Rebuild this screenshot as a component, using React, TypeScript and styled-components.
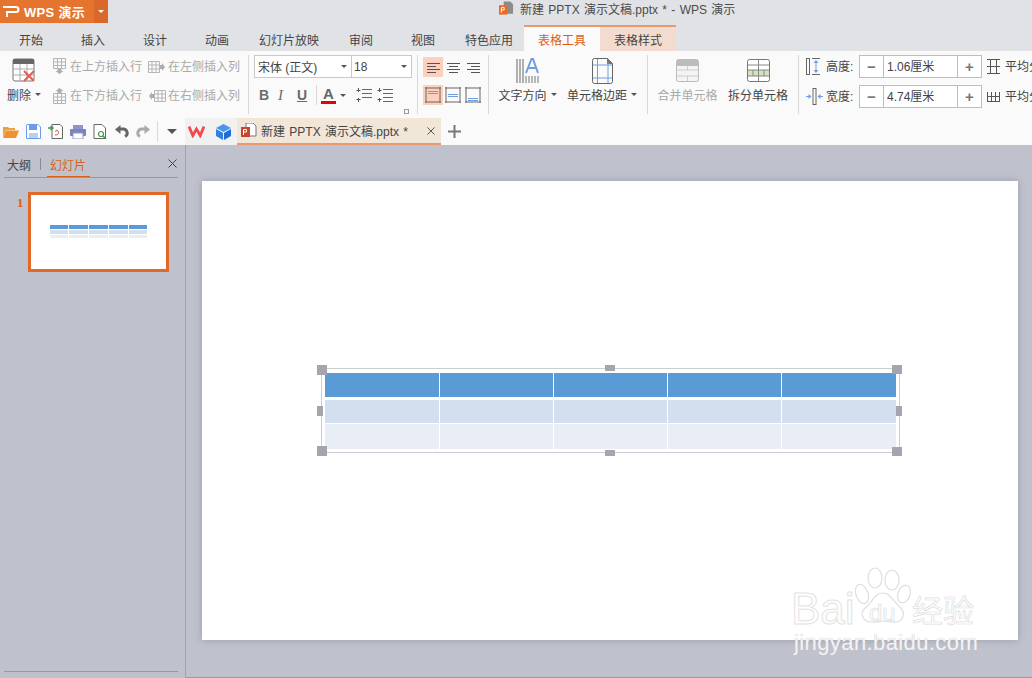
import React from 'react';
import styled, { createGlobalStyle } from 'styled-components';

const GlobalStyle = createGlobalStyle`
  html, body { margin: 0; padding: 0; overflow: hidden; }
  body { font-family: "Liberation Sans", "Noto Sans CJK SC", sans-serif; font-size: 12px; color: #444; }
`;

const Page = styled.div`
  width: 1032px;
  height: 678px;
  display: flex;
  flex-direction: column;
  position: relative;
  overflow: hidden;
  background: #bfc2cc;
`;

const TitleBar = styled.div`
  height: 25px;
  display: flex;
  background: #e1e2e5;
  position: relative;
`;

const AppButton = styled.div`
  width: 94px;
  height: 23px;
  display: flex;
  align-items: center;
  gap: 4px;
  padding-left: 3px;
  box-sizing: border-box;
  background: #e5742f;
  color: #fff;
  font-size: 13px;
  font-weight: 700;
  letter-spacing: 0.3px;
`;

const AppArrow = styled.div`
  width: 14px;
  height: 23px;
  display: flex;
  align-items: center;
  justify-content: center;
  background: #d9682a;
`;

const Caret = styled.span<{ $color?: string; $size?: number }>`
  display: inline-block;
  width: 0;
  height: 0;
  border-left: ${p => p.$size || 3}px solid transparent;
  border-right: ${p => p.$size || 3}px solid transparent;
  border-top: ${p => p.$size || 3}px solid ${p => p.$color || '#555'};
`;

const DocTitle = styled.div`
  margin-left: 391px;
  display: flex;
  align-items: center;
  gap: 6px;
  height: 17px;
  color: #4b4b4b;
  font-size: 12px;
  word-spacing: 1px;
  white-space: nowrap;
`;

const TabBar = styled.div`
  height: 26px;
  display: flex;
  background: #e1e2e5;
`;

const Tab = styled.div<{ $w: number; $kind?: 'active' | 'style' }>`
  width: ${p => p.$w}px;
  box-sizing: border-box;
  display: flex;
  align-items: center;
  justify-content: center;
  padding-top: ${p => (p.$kind ? 0 : 2)}px;
  font-size: 12px;
  color: ${p => (p.$kind === 'active' ? '#d9601c' : '#444')};
  background: ${p => (p.$kind === 'active' ? '#fafafa' : p.$kind === 'style' ? '#f3dccf' : 'transparent')};
  border-top: ${p => (p.$kind ? '2px solid #e89a6e' : 'none')};
`;

const Ribbon = styled.div`
  height: 67px;
  display: flex;
  background: #fafafa;
  overflow: hidden;
`;

const Group = styled.div<{ $w: number; $sep?: boolean }>`
  width: ${p => p.$w}px;
  height: 59px;
  margin-top: 4px;
  flex: none;
  box-sizing: border-box;
  border-right: ${p => (p.$sep ? '1px solid #d9d9d9' : 'none')};
  position: relative;
  display: flex;
`;

const BigButton = styled.div<{ $w: number; $off?: boolean }>`
  width: ${p => p.$w}px;
  flex: none;
  display: flex;
  flex-direction: column;
  align-items: center;
  font-size: 12px;
  white-space: nowrap;
  color: ${p => (p.$off ? '#a9a9a9' : '#444')};
`;

const BigIcon = styled.div`
  height: 31px;
  display: flex;
  align-items: center;
  justify-content: center;
`;

const BigLabel = styled.div`
  height: 16px;
  display: flex;
  align-items: center;
  gap: 4px;
`;

const InsertGrid = styled.div`
  display: grid;
  grid-template-columns: 96px 96px;
  grid-auto-rows: 22px;
  row-gap: 7px;
  padding-left: 4px;
`;

const SmallCmd = styled.div<{ $gap?: number }>`
  display: flex;
  align-items: center;
  gap: ${p => p.$gap || 0}px;
  font-size: 12px;
  color: #a9a9a9;
  white-space: nowrap;
`;

const CmdText = styled.span`
  position: relative;
  top: -1px;
`;

const FontColumn = styled.div`
  padding-left: 5px;
  display: flex;
  flex-direction: column;
  gap: 6px;
`;

const SelectRow = styled.div`
  display: flex;
  width: 158px;
  height: 23px;
  box-sizing: border-box;
  border: 1px solid #c9c9c9;
  background: #fff;
`;

const SelectCell = styled.div<{ $w: number; $line?: boolean }>`
  width: ${p => p.$w}px;
  box-sizing: border-box;
  padding: 0 4px 0 ${p => (p.$line ? 3 : 2)}px;
  display: flex;
  align-items: center;
  justify-content: space-between;
  color: #444;
  border-right: ${p => (p.$line ? '1px solid #c9c9c9' : 'none')};
`;

const FormatRow = styled.div`
  display: flex;
  align-items: center;
  height: 22px;
  padding-left: 4px;
`;

const FormatLetter = styled.span<{ $italic?: boolean; $under?: boolean }>`
  width: 19px;
  padding-left: 1px;
  box-sizing: border-box;
  font-family: ${p => (p.$italic ? '"Liberation Serif", serif' : '"Liberation Sans", sans-serif')};
  font-size: ${p => (p.$italic ? 15 : 14)}px;
  font-weight: ${p => (p.$italic ? 400 : 700)};
  font-style: ${p => (p.$italic ? 'italic' : 'normal')};
  text-decoration: ${p => (p.$under ? 'underline' : 'none')};
  color: #6b6b6b;
`;

const VRule = styled.span`
  width: 1px;
  height: 20px;
  background: #d9d9d9;
  margin: 0 4px 0 1px;
`;

const ColorA = styled.span`
  width: 15px;
  text-align: center;
  font-size: 15px;
  line-height: 14px;
  font-weight: 700;
  color: #666;
  border-bottom: 3px solid #e60012;
  margin-right: 4px;
`;

const FormatGap = styled.span<{ $w: number }>`
  width: ${p => p.$w}px;
`;

const Launcher = styled.span`
  position: absolute;
  right: 8px;
  bottom: 0;
  width: 3px;
  height: 3px;
  border: 1px solid #999;
`;

const AlignGrid = styled.div`
  display: grid;
  grid-template-columns: repeat(3, 20px);
  grid-auto-rows: 20px;
  row-gap: 8px;
  padding: 2px 0 0 5px;
`;

const AlignCell = styled.div<{ $on?: boolean }>`
  display: flex;
  align-items: center;
  justify-content: center;
  background: ${p => (p.$on ? '#fcd0bc' : 'transparent')};
`;

const SizeColumn = styled.div`
  display: flex;
  flex-direction: column;
  gap: 7px;
  padding-left: 7px;
`;

const SizeRow = styled.div`
  display: flex;
  align-items: center;
  height: 23px;
  white-space: nowrap;
`;

const SizeLabel = styled.span<{ $left: number }>`
  width: 33px;
  margin-left: ${p => p.$left}px;
  padding-bottom: 2px;
  color: #444;
`;

const Spinner = styled.div`
  width: 123px;
  height: 23px;
  box-sizing: border-box;
  border: 1px solid #bdbdbd;
  display: flex;
  background: #fff;
  margin-right: 5px;
`;

const SpinBtn = styled.div`
  width: 23px;
  display: flex;
  align-items: center;
  justify-content: center;
  font-size: 15px;
  font-weight: 700;
  color: #777;
`;

const SpinValue = styled.div`
  flex: 1;
  box-sizing: border-box;
  padding: 0 0 2px 3px;
  display: flex;
  align-items: center;
  color: #444;
  border-left: 1px solid #bdbdbd;
  border-right: 1px solid #bdbdbd;
`;

const DistLabel = styled.span`
  margin-left: 5px;
  padding-bottom: 2px;
`;

const QuickBar = styled.div`
  height: 27px;
  display: flex;
  background: #fafafa;
`;

const QuickIcons = styled.div`
  width: 185px;
  flex: none;
  display: flex;
  align-items: center;
  gap: 7px;
  padding-left: 3px;
  box-sizing: border-box;
`;

const QuickRule = styled.span`
  width: 1px;
  height: 21px;
  margin-right: 2px;
  background: #d9d9d9;
`;

const PinnedApps = styled.div`
  width: 52px;
  flex: none;
  box-sizing: border-box;
  display: flex;
  align-items: center;
  gap: 11px;
  padding-left: 3px;
  background: #f1f1f1;
`;

const DocTab = styled.div`
  width: 204px;
  flex: none;
  box-sizing: border-box;
  display: flex;
  align-items: center;
  gap: 4px;
  padding-left: 4px;
  background: #f2e6d9;
  border-bottom: 2px solid #e89a6e;
  color: #444;
  word-spacing: 1px;
  white-space: nowrap;
`;

const TabClose = styled.span`
  margin-left: auto;
  margin-right: 6px;
  display: flex;
`;

const AddTab = styled.div`
  margin-left: 7px;
  display: flex;
  align-items: center;
`;

const Workspace = styled.div`
  flex: 1;
  display: flex;
  min-height: 0;
`;

const Sidebar = styled.aside`
  width: 186px;
  flex: none;
  box-sizing: border-box;
  border-right: 1px solid #9fa2aa;
  padding: 9px 7px 6px 4px;
  display: flex;
  flex-direction: column;
`;

const SideTabs = styled.div`
  height: 23px;
  display: flex;
  align-items: flex-start;
  border-bottom: 1px solid #96989f;
  position: relative;
  font-size: 12px;
`;

const SideTab = styled.div<{ $on?: boolean }>`
  height: 23px;
  box-sizing: border-box;
  padding: 2px 4px 0 3px;
  color: ${p => (p.$on ? '#d9601c' : '#444')};
  border-bottom: ${p => (p.$on ? '1px solid #d9601c' : 'none')};
`;

const SideDivider = styled.span`
  width: 1px;
  height: 12px;
  margin: 4px 6px 0 5px;
  background: #8a8c93;
`;

const SideClose = styled.span`
  margin-left: auto;
  margin-top: 5px;
  margin-right: 1px;
  display: flex;
`;

const ThumbRow = styled.div`
  display: flex;
  align-items: flex-start;
  margin-top: 14px;
  flex: 1;
`;

const ThumbNumber = styled.div`
  width: 24px;
  padding: 3px 0 0 13px;
  box-sizing: border-box;
  font-family: "Liberation Serif", serif;
  font-size: 13px;
  font-weight: 700;
  color: #d9601c;
`;

const Thumb = styled.div`
  width: 141px;
  height: 80px;
  box-sizing: border-box;
  border: 3px solid #e0692a;
  background: #fff;
  padding-top: 30px;
  display: flex;
  justify-content: center;
`;

const ThumbTable = styled.div`
  width: 98px;
  display: grid;
  grid-template-columns: repeat(5, 1fr);
  column-gap: 1px;
  row-gap: 1px;
  align-self: flex-start;
`;

const ThumbCell = styled.span<{ $row: number }>`
  height: ${p => (p.$row === 2 ? 3 : 4)}px;
  background: ${p => ROW_COLORS[p.$row]};
`;

const SideFooter = styled.div`
  height: 1px;
  background: #96989f;
`;

const Canvas = styled.main`
  flex: 1;
  padding: 36px 0 0 16px;
  box-sizing: border-box;
  border-bottom: 1px solid #9a9ca4;
`;

const Slide = styled.div`
  width: 816px;
  height: 459px;
  background: #fff;
  box-shadow: 0 0 7px rgba(110, 112, 125, 0.45);
  position: relative;
`;

const Frame = styled.div`
  position: absolute;
  left: 119px;
  top: 187px;
  width: 579px;
  height: 85px;
  box-sizing: border-box;
  border: 1px solid #cdcdcd;
`;

const TableGrid = styled.div`
  position: absolute;
  left: 123px;
  top: 192px;
  display: grid;
  grid-template-columns: 114px 113px 113px 113px 114px;
  grid-template-rows: 24px 26px 26px;
  column-gap: 1px;
`;

const Cell = styled.div<{ $row: number }>`
  background: ${p => ROW_COLORS[p.$row]};
  margin-top: ${p => (p.$row === 1 ? 3 : p.$row === 2 ? 1 : 0)}px;
`;

const Handle = styled.span<{ $x: number; $y: number; $w: number; $h: number }>`
  position: absolute;
  left: ${p => p.$x - 202}px;
  top: ${p => p.$y - 181}px;
  width: ${p => p.$w}px;
  height: ${p => p.$h}px;
  background: #a4a5ae;
`;

const Watermark = styled.div`
  position: absolute;
  left: 790px;
  top: 566px;
  width: 200px;
  height: 90px;
  pointer-events: none;
`;

const WmBai = styled.span`
  position: absolute;
  left: 1px;
  top: 21px;
  font-size: 44px;
  line-height: 44px;
  color: #fff;
  -webkit-text-stroke: 1px #e2e2e2;
`;

const WmDu = styled.span`
  position: absolute;
  left: 79px;
  top: 35px;
  font-size: 24px;
  line-height: 24px;
  color: #fff;
  -webkit-text-stroke: 0.7px #dedede;
`;

const WmCn = styled.span`
  position: absolute;
  left: 122px;
  top: 30px;
  font-size: 31px;
  line-height: 32px;
  color: #fff;
  -webkit-text-stroke: 0.7px #dedede;
`;

const WmUrl = styled.span`
  position: absolute;
  left: 4px;
  top: 65px;
  font-size: 22px;
  line-height: 24px;
  letter-spacing: 0.4px;
  color: #f3f3f5;
  text-shadow: 0 0 1px #c4c4c8;
  white-space: nowrap;
`;

const ROW_COLORS = ['#5b9bd5', '#d3deef', '#e9edf6'];

const PLogo = () => (
  <svg width="17" height="11" viewBox="0 0 17 11" fill="none" stroke="#fff" strokeWidth="2">
    <path d="M0 1h13a2.500 2.500 0 0 1 0 5H4v5" />
  </svg>
);

const DeleteIcon = () => (
  <svg width="24" height="25" viewBox="0 0 24 25">
    <rect x="1" y="1" width="21" height="22" rx="2" fill="#fff" stroke="#777" />
    <rect x="1" y="1" width="21" height="5" fill="#666" />
    <path d="M1 11h21M1 17h21M8 6v17M15 6v17" stroke="#aaa" />
    <path d="M12 13l10 10M22 13L12 23" stroke="#ea5a50" strokeWidth="2" />
  </svg>
);

// place = where the new row/column goes, so the arrow sits on the opposite side of the grid
const InsertIcon = ({ place }: { place: 'above' | 'below' | 'left' | 'right' }) => {
  const shapes = {
    above: { grid: 'M1.500 .500h12v10h-12zM1.500 4h12M1.500 7.500h12M5.500 .500v10M9.500 .500v10', arrow: 'M5.500 11h4v2h2l-4 3-4-3h2z' },
    below: { grid: 'M1.500 6.500h12v10h-12zM1.500 10h12M1.500 13.500h12M5.500 6.500v10M9.500 6.500v10', arrow: 'M5.500 6h4V4h2l-4-3-4 3h2z' },
    left: { grid: 'M.500 3.500h11v11h-11zM.500 7h11M.500 11h11M4 3.500v11M8 3.500v11', arrow: 'M12 7h2V5l3 4-3 4v-2h-2z' },
    right: { grid: 'M6.500 3.500h11v11h-11zM6.500 7h11M6.500 11h11M10 3.500v11M14 3.500v11', arrow: 'M6 7H4V5L1 9l3 4v-2h2z' },
  }[place];
  return (
    <svg width="18" height="17" viewBox="0 0 18 17" fill="none">
      <path d={shapes.grid} stroke="#b5b5b5" />
      <path d={shapes.arrow} fill="#adadad" />
    </svg>
  );
};

const AlignLines = ({ align }: { align: 'l' | 'c' | 'r' }) => {
  const x = (w: number) => (align === 'l' ? 0 : align === 'c' ? (13 - w) / 2 : 13 - w);
  return (
    <svg width="13" height="11" viewBox="0 0 13 11" stroke="#555">
      <path d={`M${x(13)} 1.500h13M${x(9)} 4.500h9M${x(13)} 7.500h13M${x(9)} 10.500h9`} />
    </svg>
  );
};

const VAlignIcon = ({ pos }: { pos: 't' | 'm' | 'b' }) => {
  const y = pos === 't' ? 4 : pos === 'm' ? 7 : 11;
  return (
    <svg width="16" height="16" viewBox="0 0 16 16" fill="none">
      <path d="M1 0v16M15 0v16M0 1h16M0 15h16" stroke="#666" />
      <path d={`M3 ${y}.5h10M3 ${y + 2}.5h10`} stroke="#6f9fe0" />
    </svg>
  );
};

const SpacingIcon = ({ lines }: { lines: number }) => (
  <svg width="17" height="16" viewBox="0 0 17 16" fill="none">
    <path d="M3.500 1v4M1.500 3.500h4M3.500 11v4M1.500 12.500h4" stroke="#555" />
    {[2, 6, 10, 14].slice(0, lines).map(y => (
      <path key={y} d={`M7 ${y}.5h10`} stroke="#666" />
    ))}
  </svg>
);

const TextDirIcon = () => (
  <svg width="24" height="26" viewBox="0 0 24 26">
    <path d="M1 1v24M4 1v24M7 1v24" stroke="#666" />
    <path d="M10 18v7M13 18v7M16 18v7M19 18v7M22 18v7" stroke="#777" />
    <path d="M10 15L15.500 1h1.500L22 15M12 10h8" stroke="#6f9fe0" strokeWidth="2" fill="none" />
  </svg>
);

const CellMarginIcon = () => (
  <svg width="21" height="26" viewBox="0 0 21 26" fill="none">
    <path d="M2.500.500h13l5 5v18a2 2 0 0 1-2 2H2.500a2 2 0 0 1-2-2V2.500a2 2 0 0 1 2-2z" stroke="#666" />
    <path d="M15 0l6 6h-6z" fill="#777" />
    <path d="M5.500 1v24M16 5v20M1 7h19M1 20h19" stroke="#6f9fe0" />
  </svg>
);

const MergeIcon = () => (
  <svg width="23" height="23" viewBox="0 0 23 23">
    <rect x=".5" y=".5" width="22" height="22" rx="2" fill="#f4f4f4" stroke="#bbb" />
    <rect x="1" y="1" width="21" height="6" fill="#bcbcbc" />
    <path d="M1 11h21M1 17h21M11.500 7v4M11.500 17v5" stroke="#ccc" />
  </svg>
);

const SplitIcon = () => (
  <svg width="23" height="23" viewBox="0 0 23 23">
    <rect x=".5" y=".5" width="22" height="22" rx="2" fill="#fff" stroke="#777" />
    <rect x="1" y="11" width="21" height="6" fill="#d4e3bd" />
    <path d="M1 6h21M1 11h21M1 17h21M11.500 1v21M6 11v6M17 11v6" stroke="#888" />
  </svg>
);

const HeightIcon = () => (
  <svg width="14" height="17" viewBox="0 0 14 17" fill="none">
    <rect x=".5" y=".5" width="3" height="16" stroke="#666" />
    <path d="M6 .500h8M6 16.500h8" stroke="#666" />
    <path d="M10 2l-2.500 3h5zM10 15l-2.500-3h5z" fill="#6f9fe0" />
    <path d="M10 5v7" stroke="#6f9fe0" />
  </svg>
);

const WidthIcon = () => (
  <svg width="17" height="17" viewBox="0 0 17 17" fill="none">
    <rect x="7" y=".5" width="3" height="16" stroke="#666" />
    <path d="M5.500 8.500L2.500 6v5zM11.500 8.500l3-2.500v5z" fill="#6f9fe0" />
    <path d="M0 8.500h3M14 8.500h3" stroke="#6f9fe0" />
  </svg>
);

const DistRowsIcon = () => (
  <svg width="13" height="15" viewBox="0 0 13 15" stroke="#555" fill="none">
    <path d="M0 .500h13M0 7.500h13M0 14.500h13M3.500 0v15M9.500 0v15" />
  </svg>
);

const DistColsIcon = () => (
  <svg width="13" height="11" viewBox="0 0 13 11" stroke="#555" fill="none">
    <path d="M0 5.500h13M0 10.500h13M.5 1v10M4.500 1v10M8.500 1v10M12.500 1v10" />
  </svg>
);

const CloseIcon = ({ size = 9 }: { size?: number }) => (
  <svg width={size} height={size} viewBox="0 0 9 9" stroke="#444" fill="none">
    <path d="M.5.500l8 8M8.500.500l-8 8" />
  </svg>
);

const FolderIcon = () => (
  <svg width="16" height="14" viewBox="0 0 16 14">
    <path d="M0 2h5l1 1h6v2H3L0 12z" fill="#e8a33d" />
    <path d="M3 5.500h13L13 13H0z" fill="#f0902e" />
  </svg>
);

const SaveIcon = () => (
  <svg width="15" height="15" viewBox="0 0 15 15" fill="none">
    <path d="M1 .5h11l2.500 2.500v11.500H.5V1z" fill="#fff" stroke="#6c9be8" />
    <rect x="3" y="1" width="8" height="5" fill="#6c9be8" />
    <rect x="3" y="9" width="9" height="5" fill="#b9d0f2" />
  </svg>
);

const ExportIcon = () => (
  <svg width="15" height="15" viewBox="0 0 15 15" fill="none">
    <path d="M4 .5h8l2.500 2.500v11.500H4z" fill="#fff" stroke="#666" />
    <path d="M0 4h4M2.500 2l2.500 2-2.500 2" stroke="#3b9a4b" strokeWidth="1.400" />
    <path d="M7 11c4 0 4-2 3-4-1-1.500-3-.5-2 1" stroke="#d9453a" />
  </svg>
);

const PrintIcon = () => (
  <svg width="16" height="14" viewBox="0 0 16 14">
    <rect x="3" y="0" width="10" height="4" fill="#8f95c9" />
    <rect x="0" y="4" width="16" height="7" rx="1" fill="#7d84bd" />
    <rect x="3" y="8" width="10" height="6" fill="#fff" stroke="#8f95c9" />
  </svg>
);

const PreviewIcon = () => (
  <svg width="15" height="15" viewBox="0 0 15 15" fill="none">
    <path d="M1 .5h8l3.500 3.500v10.500H1z" stroke="#666" fill="#fff" />
    <circle cx="8" cy="10" r="2.500" stroke="#3b9a4b" strokeWidth="1.200" />
    <path d="M10 12l3 3" stroke="#3b9a4b" strokeWidth="1.600" />
  </svg>
);

const UndoIcon = ({ color, flip }: { color: string; flip?: boolean }) => (
  <svg width="14" height="13" viewBox="0 0 14 13" fill="none" style={flip ? { transform: 'scaleX(-1)' } : undefined}>
    <path d="M3 4h4.500a4 4 0 0 1 2.500 7.500" stroke={color} strokeWidth="3" />
    <path d="M0 4.500L5.500 0v9z" fill={color} />
  </svg>
);

const WpsMark = () => (
  <svg width="17" height="13" viewBox="0 0 17 13" fill="none">
    <path d="M1 1.500l3.800 9L8.500 4l3.700 6.500L16 1.500" stroke="#f4484d" strokeWidth="2.800" />
  </svg>
);

const CubeMark = () => (
  <svg width="15" height="16" viewBox="0 0 15 16">
    <path d="M7.500 0L15 4 7.500 8 0 4z" fill="#4a96ee" />
    <path d="M0 5l7 4v7l-7-4z" fill="#2f7fe0" />
    <path d="M15 5l-7 4v7l7-4z" fill="#1d6fd6" />
  </svg>
);

const PptFileIcon = ({ small }: { small?: boolean }) => (
  <svg width={small ? 15 : 16} height="15" viewBox="0 0 16 15">
    <path d="M5 0h7l3 3v10H5z" fill={small ? '#8c8c8c' : '#fff'} stroke={small ? 'none' : '#777'} />
    <rect x="0" y="4" width="9" height="10" fill={small ? '#ea6a22' : '#c8452c'} />
    <path d="M2.500 12V6.500h3v2.500h-3" stroke="#fff" fill="none" />
  </svg>
);

const Paw = () => (
  <svg width="56" height="58" viewBox="0 0 56 58" fill="#fff" stroke="#dedede" strokeWidth="1.200" style={{ position: 'absolute', left: 65, top: 1 }}>
    <ellipse cx="7" cy="27" rx="6" ry="10" transform="rotate(-20 7 27)" />
    <ellipse cx="20" cy="11" rx="7" ry="10" />
    <ellipse cx="37" cy="13" rx="7" ry="10" />
    <ellipse cx="49" cy="27" rx="6" ry="9" transform="rotate(20 49 27)" />
    <path d="M28 26c7 0 10 8 17 14 7 7 2 16-7 15-4 0-6-1-10-1s-7 2-11 1C8 55 4 47 10 41c7-5 9-15 18-15z" />
  </svg>
);

const handles = [
  { x: 317, y: 365, w: 10, h: 10 },
  { x: 605, y: 365, w: 10, h: 6 },
  { x: 892, y: 365, w: 10, h: 9 },
  { x: 317, y: 406, w: 6, h: 10 },
  { x: 896, y: 406, w: 6, h: 10 },
  { x: 317, y: 446, w: 10, h: 10 },
  { x: 605, y: 450, w: 10, h: 6 },
  { x: 892, y: 447, w: 10, h: 9 },
];

const tabs: { label: string; w: number; kind?: 'active' | 'style' }[] = [
  { label: '开始', w: 62 },
  { label: '插入', w: 62 },
  { label: '设计', w: 62 },
  { label: '动画', w: 62 },
  { label: '幻灯片放映', w: 82 },
  { label: '审阅', w: 62 },
  { label: '视图', w: 62 },
  { label: '特色应用', w: 70 },
  { label: '表格工具', w: 76, kind: 'active' },
  { label: '表格样式', w: 76, kind: 'style' },
];

const rows = [0, 1, 2];
const cols = [0, 1, 2, 3, 4];

export default function App() {
  return (
    <Page>
      <GlobalStyle />
      <TitleBar>
        <AppButton>
          <PLogo />
          <span>WPS 演示</span>
        </AppButton>
        <AppArrow>
          <Caret $color="#fff" />
        </AppArrow>
        <DocTitle>
          <PptFileIcon small />
          <span>新建 PPTX 演示文稿.pptx * - WPS 演示</span>
        </DocTitle>
      </TitleBar>

      <TabBar>
        {tabs.map(tab => (
          <Tab key={tab.label} $w={tab.w} $kind={tab.kind}>
            {tab.label}
          </Tab>
        ))}
      </TabBar>

      <Ribbon>
        <Group $w={48}>
          <BigButton $w={48}>
            <BigIcon>
              <DeleteIcon />
            </BigIcon>
            <BigLabel>
              删除 <Caret />
            </BigLabel>
          </BigButton>
        </Group>
        <Group $w={201} $sep>
          <InsertGrid>
            <SmallCmd>
              <InsertIcon place="above" />
              <CmdText>在上方插入行</CmdText>
            </SmallCmd>
            <SmallCmd $gap={2}>
              <InsertIcon place="left" />
              <CmdText>在左侧插入列</CmdText>
            </SmallCmd>
            <SmallCmd>
              <InsertIcon place="below" />
              <CmdText>在下方插入行</CmdText>
            </SmallCmd>
            <SmallCmd $gap={2}>
              <InsertIcon place="right" />
              <CmdText>在右侧插入列</CmdText>
            </SmallCmd>
          </InsertGrid>
        </Group>
        <Group $w={169} $sep>
          <FontColumn>
            <SelectRow>
              <SelectCell $w={97} $line>
                宋体 (正文) <Caret />
              </SelectCell>
              <SelectCell $w={59}>
                18 <Caret />
              </SelectCell>
            </SelectRow>
            <FormatRow>
              <FormatLetter>B</FormatLetter>
              <FormatLetter $italic>I</FormatLetter>
              <FormatLetter $under>U</FormatLetter>
              <VRule />
              <ColorA>A</ColorA>
              <Caret />
              <FormatGap $w={9} />
              <SpacingIcon lines={3} />
              <FormatGap $w={4} />
              <SpacingIcon lines={4} />
            </FormatRow>
          </FontColumn>
          <Launcher />
        </Group>
        <Group $w={71} $sep>
          <AlignGrid>
            <AlignCell $on>
              <AlignLines align="l" />
            </AlignCell>
            <AlignCell>
              <AlignLines align="c" />
            </AlignCell>
            <AlignCell>
              <AlignLines align="r" />
            </AlignCell>
            <AlignCell $on>
              <VAlignIcon pos="t" />
            </AlignCell>
            <AlignCell>
              <VAlignIcon pos="m" />
            </AlignCell>
            <AlignCell>
              <VAlignIcon pos="b" />
            </AlignCell>
          </AlignGrid>
        </Group>
        <Group $w={159} $sep>
          <BigButton $w={77}>
            <BigIcon>
              <TextDirIcon />
            </BigIcon>
            <BigLabel>
              文字方向 <Caret />
            </BigLabel>
          </BigButton>
          <BigButton $w={72}>
            <BigIcon>
              <CellMarginIcon />
            </BigIcon>
            <BigLabel>
              单元格边距 <Caret />
            </BigLabel>
          </BigButton>
        </Group>
        <Group $w={151} $sep>
          <BigButton $w={79} $off>
            <BigIcon>
              <MergeIcon />
            </BigIcon>
            <BigLabel>合并单元格</BigLabel>
          </BigButton>
          <BigButton $w={62}>
            <BigIcon>
              <SplitIcon />
            </BigIcon>
            <BigLabel>拆分单元格</BigLabel>
          </BigButton>
        </Group>
        <Group $w={233}>
          <SizeColumn>
            <SizeRow>
              <HeightIcon />
              <SizeLabel $left={6}>高度:</SizeLabel>
              <Spinner>
                <SpinBtn>−</SpinBtn>
                <SpinValue>1.06厘米</SpinValue>
                <SpinBtn>+</SpinBtn>
              </Spinner>
              <DistRowsIcon />
              <DistLabel>平均分布各行</DistLabel>
            </SizeRow>
            <SizeRow>
              <WidthIcon />
              <SizeLabel $left={3}>宽度:</SizeLabel>
              <Spinner>
                <SpinBtn>−</SpinBtn>
                <SpinValue>4.74厘米</SpinValue>
                <SpinBtn>+</SpinBtn>
              </Spinner>
              <DistColsIcon />
              <DistLabel>平均分布各列</DistLabel>
            </SizeRow>
          </SizeColumn>
        </Group>
      </Ribbon>

      <QuickBar>
        <QuickIcons>
          <FolderIcon />
          <SaveIcon />
          <ExportIcon />
          <PrintIcon />
          <PreviewIcon />
          <UndoIcon color="#666" />
          <UndoIcon color="#aaa" flip />
          <QuickRule />
          <Caret $color="#555" $size={5} />
        </QuickIcons>
        <PinnedApps>
          <WpsMark />
          <CubeMark />
        </PinnedApps>
        <DocTab>
          <PptFileIcon />
          <span>新建 PPTX 演示文稿.pptx *</span>
          <TabClose>
            <CloseIcon size={8} />
          </TabClose>
        </DocTab>
        <AddTab>
          <svg width="13" height="13" viewBox="0 0 13 13" stroke="#777" strokeWidth="2">
            <path d="M6.500 0v13M0 6.500h13" />
          </svg>
        </AddTab>
      </QuickBar>

      <Workspace>
        <Sidebar>
          <SideTabs>
            <SideTab>大纲</SideTab>
            <SideDivider />
            <SideTab $on>幻灯片</SideTab>
            <SideClose>
              <CloseIcon />
            </SideClose>
          </SideTabs>
          <ThumbRow>
            <ThumbNumber>1</ThumbNumber>
            <Thumb>
              <ThumbTable>
                {rows.map(r => cols.map(c => <ThumbCell key={`${r}-${c}`} $row={r} />))}
              </ThumbTable>
            </Thumb>
          </ThumbRow>
          <SideFooter />
        </Sidebar>
        <Canvas>
          <Slide>
            <Frame />
            <TableGrid>
              {rows.map(r => cols.map(c => <Cell key={`${r}-${c}`} $row={r} />))}
            </TableGrid>
            {handles.map(h => (
              <Handle key={`${h.x}-${h.y}`} $x={h.x} $y={h.y} $w={h.w} $h={h.h} />
            ))}
          </Slide>
        </Canvas>
      </Workspace>

      <Watermark>
        <Paw />
        <WmBai>Bai</WmBai>
        <WmDu>du</WmDu>
        <WmCn>经验</WmCn>
        <WmUrl>jingyan.baidu.com</WmUrl>
      </Watermark>
    </Page>
  );
}
